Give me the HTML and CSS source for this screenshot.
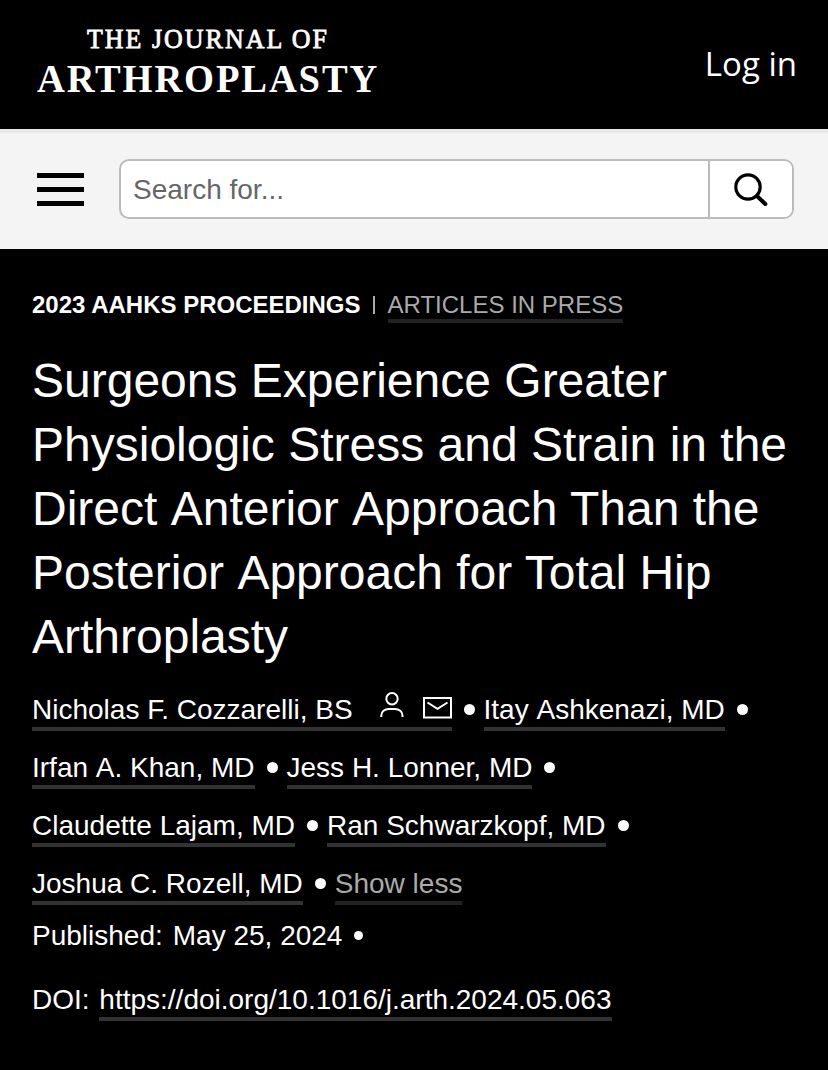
FILE: index.html
```html
<!DOCTYPE html>
<html lang="en">
<head>
  <meta charset="UTF-8" />
  <meta name="viewport" content="width=device-width, initial-scale=1.0" />
  <title>The Journal of Arthroplasty</title>
  <link rel="stylesheet" href="styles.css">
</head>
<body>
  <header class="header">
    <a class="logo" href="#">
      <svg width="342" height="80" viewBox="0 0 342 80">
        <text class="logo-small" transform="translate(50 28) scale(.96 1)" textLength="250">THE JOURNAL OF</text>
        <text class="logo-big" transform="translate(0 71.5) scale(.94 1)" textLength="362">ARTHROPLASTY</text>
      </svg>
    </a>
    <a class="login" href="#">Log in</a>
  </header>

  <div class="toolbar">
    <button class="menu" aria-label="Menu"><span></span><span></span><span></span></button>
    <form class="search">
      <input type="text" placeholder="Search for...">
      <button type="button" aria-label="Search">
        <svg width="36" height="36" viewBox="0 0 36 36" fill="none" stroke="#000">
          <circle cx="15" cy="15" r="12.2" stroke-width="3.2"/>
          <path d="M24 24l8.3 8" stroke-width="4" stroke-linecap="round"/>
        </svg>
      </button>
    </form>
  </div>

  <main class="article">
    <div class="section">
      <strong>2023 AAHKS PROCEEDINGS</strong>
      <span class="bar"></span>
      <a class="link muted" href="#">ARTICLES IN PRESS</a>
    </div>

    <h1>Surgeons Experience Greater Physiologic Stress and Strain in the <span class="loose">Direct Anterior Approach</span> Than the <span class="loose">Posterior Approach</span> for Total Hip Arthroplasty</h1>

    <div class="authors">
      <div class="row">
        <a class="link first" href="#">Nicholas F. Cozzarelli, BS<svg class="person" width="24" height="28" viewBox="0 0 24 28"><circle cx="12" cy="7.7" r="5.7"/><path d="M1.3 26v-1.5c0-4 3.5-6.5 7.5-6.5h6.2c4 0 7.5 2.5 7.5 6.5V26"/></svg><svg class="mail" width="29" height="22" viewBox="0 0 29 22"><path d="M1 1h27v19.5H1zM4.5 5.5l10 6.3 10-6.3"/></svg></a>
        <i class="dot"></i>
        <a class="link" href="#"><span class="loose">Itay Ashkenazi</span>, MD</a>
        <i class="dot"></i>
      </div>
      <div class="row">
        <a class="link" href="#"><span class="loose">Irfan A.</span> Khan, MD</a>
        <i class="dot"></i>
        <a class="link" href="#">Jess H. Lonner, MD</a>
        <i class="dot"></i>
      </div>
      <div class="row">
        <a class="link" href="#">Claudette Lajam, MD</a>
        <i class="dot"></i>
        <a class="link" href="#">Ran Schwarzkopf, MD</a>
        <i class="dot"></i>
      </div>
      <div class="row">
        <a class="link" href="#">Joshua C. Rozell, MD</a>
        <i class="dot"></i>
        <a class="link muted" href="#">Show less</a>
      </div>
    </div>

    <div class="published">Published: <span>May 25, 2024</span><i class="dot small"></i></div>
    <div class="doi">DOI: <a class="link" href="#">https://doi.org/10.1016/j.arth.2024.05.063</a></div>
  </main>
</body>
</html>
```
FILE: styles.css
```css
* {
  box-sizing: border-box;
}

body {
  margin: 0;
  min-height: 100vh;
  background: #000;
  color: #fff;
  font-family: "Liberation Sans", Arial, sans-serif;
  font-size: 28px;
  overflow: hidden;
}

a {
  color: inherit;
  text-decoration: none;
}

.header {
  display: flex;
  justify-content: space-between;
  height: 129px;
  padding: 20px 31px 0 37px;
}

.logo svg {
  display: block;
}

.logo text {
  font-family: "Liberation Serif", serif;
  fill: #fff;
}

.logo-small {
  font-size: 27px;
  stroke: #fff;
  stroke-width: 0.8px;
}

.logo-big {
  font-size: 41px;
  font-weight: 700;
}

.login {
  padding-top: 21px;
  font-family: "Open Sans", sans-serif;
  font-size: 33px;
  line-height: 45px;
}

.toolbar {
  display: flex;
  align-items: flex-start;
  height: 120px;
  padding: 26px 34px 0 37px;
  background: #f4f4f4;
  border-top: 4px solid #e9e9e9;
}

.menu {
  display: flex;
  flex-direction: column;
  gap: 9px;
  width: 47px;
  margin: 14px 35px 0 0;
  padding: 0;
  border: 0;
  background: none;
}

.menu span {
  width: 47px;
  height: 5px;
  background: #000;
}

.search {
  display: flex;
  flex: 1;
  height: 60px;
  border: 2px solid #bbb;
  border-radius: 10px;
  background: #fff;
  overflow: hidden;
}

.search input {
  flex: 1;
  min-width: 0;
  padding: 2px 12px 0;
  border: 0;
  background: none;
  font: inherit;
}

.search input::placeholder {
  color: #666;
}

.search button {
  display: flex;
  align-items: center;
  justify-content: center;
  width: 84px;
  padding: 1px 0 0;
  border: 0;
  border-left: 2px solid #bbb;
  background: #fff;
}

.article {
  padding: 40px 32px 0;
}

.section {
  display: flex;
  align-items: center;
  height: 32px;
  font-size: 24px;
}

.bar {
  width: 2px;
  height: 18px;
  margin: 0 13px 0 12px;
  background: #aaa;
}

.link {
  padding-bottom: 2px;
  border-bottom: 4px solid #333;
}

.section .link {
  margin-top: 4px;
  padding-bottom: 0;
}

.muted {
  color: #aaa;
  border-color: #222;
}

h1 {
  margin: 28px 0 11px;
  font-size: 48px;
  font-weight: 400;
  line-height: 64px;
}

/* keeps the full word space in front of a capital A */
.loose {
  font-kerning: none;
}

.row {
  display: flex;
  align-items: center;
  height: 58px;
}

.row .link {
  margin-top: 6px;
  padding-bottom: 1px;
}

.dot {
  width: 11px;
  height: 11px;
  margin: 0 9px 0 12px;
  border-radius: 50%;
  background: #fff;
}

.dot.small {
  width: 9px;
  height: 9px;
}

.published .dot {
  margin-bottom: 2px;
}

.link svg {
  fill: none;
  stroke: #fff;
  stroke-width: 2;
}

.person {
  margin: -4px 19px 0 27px;
}

.published {
  display: flex;
  align-items: center;
  height: 40px;
  margin-top: 4px;
}

.published span {
  margin-left: 10px;
}

.doi {
  margin-top: 24px;
  line-height: 40px;
}

.doi .link {
  margin-left: 2px;
}
```
